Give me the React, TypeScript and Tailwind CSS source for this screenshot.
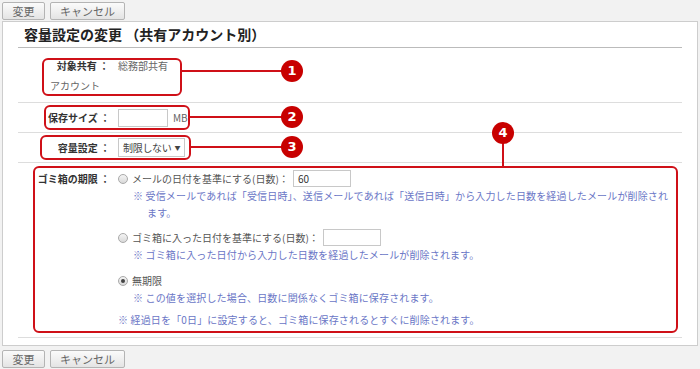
import React from 'react';

function Btn({ label, w }: { label: string; w: string }) {
  return (
    <button
      className={`${w} h-[18px] border border-[#b4b4b4] rounded-[2px] bg-gradient-to-b from-[#fbfbfb] to-[#e4e4e4] text-[11px] leading-none text-[#666] flex items-center justify-center`}
    >
      {label}
    </button>
  );
}

function Radio({ checked }: { checked?: boolean }) {
  return (
    <span className="w-[10px] h-[10px] rounded-full border border-[#a9a9a9] bg-gradient-to-b from-[#f4f4f4] to-[#d9d9d9] flex items-center justify-center shrink-0">
      {checked && <span className="w-[4px] h-[4px] rounded-full bg-[#444]" />}
    </span>
  );
}

function Marker({ n }: { n: number }) {
  return (
    <div className="w-[22px] h-[22px] rounded-full bg-[#c80000] text-white text-[13px] font-bold flex items-center justify-center font-['DejaVu_Sans',sans-serif]">
      {n}
    </div>
  );
}

const label = 'w-[100px] shrink-0 text-right font-bold text-[#333] pr-[8px] whitespace-nowrap';
const note = 'text-[#6a76c6] leading-[17px] whitespace-nowrap tracking-[0.15px]';

export default function App() {
  return (
    <div className="relative w-[700px] h-[369px] overflow-hidden bg-[#f2f2f2] font-['Noto_Sans_CJK_JP','Noto_Sans',sans-serif] text-[10px] text-[#555]">
      <div className="flex gap-[5px] pl-[2px] pt-[2px] h-[21px]">
        <Btn label="変更" w="w-[43px]" />
        <Btn label="キャンセル" w="w-[75px]" />
      </div>

      <div className="mx-[2px] h-[325px] border border-[#cdcdcd] bg-white px-[15px]">
        <div className="h-[26px] flex items-center pl-[6px] border-b border-[#bbb] text-[14px] font-bold text-[#222]">
          容量設定の変更 （共有アカウント別）
        </div>

        {/* 対象共有 */}
        <div className="h-[55px] border-b border-[#ddd] pt-[8px]">
          <div className="ml-[32px] leading-[20px]">
            <div className="flex">
              <span className="w-[60px] pr-[1px] text-right font-bold text-[#333] whitespace-nowrap">対象共有 ：</span>
              <span className="ml-[8px] text-[#666]">総務部共有</span>
            </div>
            <div className="text-[#666]">アカウント</div>
          </div>
        </div>

        {/* 保存サイズ */}
        <div className="h-[30px] border-b border-[#ddd] flex items-center">
          <div className={label}>保存サイズ ：</div>
          <div className="w-[50px] h-[18px] border border-[#c8c8c8] bg-white" />
          <span className="ml-[5px] text-[#666]">MB</span>
        </div>

        {/* 容量設定 */}
        <div className="h-[30px] border-b border-[#ddd] flex items-center">
          <div className={label}>容量設定 ：</div>
          <div className="w-[67px] h-[19px] border border-[#c8c8c8] bg-white flex items-center pl-[4px] text-[#444] whitespace-nowrap">
            <span className="tracking-[-0.3px]">制限しない</span>
            <span className="ml-[3px] text-[6px]">▼</span>
          </div>
        </div>

        {/* ゴミ箱の期限 */}
        <div className="h-[175px] border-b border-[#ddd] pt-[7px] flex">
          <div className={`${label} h-[17px] flex items-center justify-end`}>ゴミ箱の期限 ：</div>
          <div className="flex-1">
            <div className="h-[17px] flex items-center">
              <Radio />
              <span className="ml-[4px] text-[#555] whitespace-nowrap">メールの日付を基準にする(日数)：</span>
              <div className="ml-[4px] w-[58px] h-[17px] border border-[#c8c8c8] bg-white flex items-center pl-[4px] text-[#333]">
                60
              </div>
            </div>
            <div className={`${note} pl-[15px]`}>
              ※ 受信メールであれば「受信日時」、送信メールであれば「送信日時」から入力した日数を経過したメールが削除され
            </div>
            <div className={`${note} pl-[29px]`}>ます。</div>

            <div className="mt-[8px] h-[17px] flex items-center">
              <Radio />
              <span className="ml-[4px] text-[#555] whitespace-nowrap">ゴミ箱に入った日付を基準にする(日数)：</span>
              <div className="ml-[4px] w-[58px] h-[17px] border border-[#c8c8c8] bg-white" />
            </div>
            <div className={`${note} pl-[15px]`}>※ ゴミ箱に入った日付から入力した日数を経過したメールが削除されます。</div>

            <div className="mt-[9px] h-[17px] flex items-center">
              <Radio checked />
              <span className="ml-[4px] text-[#555]">無期限</span>
            </div>
            <div className={`${note} pl-[15px]`}>※ この値を選択した場合、日数に関係なくゴミ箱に保存されます。</div>

            <div className={`${note} mt-[5px]`}>※ 経過日を「0日」に設定すると、ゴミ箱に保存されるとすぐに削除されます。</div>
          </div>
        </div>
      </div>

      <div className="flex gap-[5px] pl-[2px] pt-[4px]">
        <Btn label="変更" w="w-[43px]" />
        <Btn label="キャンセル" w="w-[75px]" />
      </div>

      {/* annotations */}
      <div className="absolute left-[42px] top-[58px] w-[140px] h-[38px] border-2 border-[#cf1018] rounded-[6px]" />
      <div className="absolute left-[182px] top-[70px] w-[100px] h-[2px] bg-[#cf1018]" />
      <div className="absolute left-[281px] top-[60px]"><Marker n={1} /></div>

      <div className="absolute left-[44px] top-[105px] w-[146px] h-[25px] border-2 border-[#cf1018] rounded-[6px]" />
      <div className="absolute left-[190px] top-[116px] w-[92px] h-[2px] bg-[#cf1018]" />
      <div className="absolute left-[281px] top-[106px]"><Marker n={2} /></div>

      <div className="absolute left-[40px] top-[135px] w-[151px] h-[25px] border-2 border-[#cf1018] rounded-[6px]" />
      <div className="absolute left-[191px] top-[146px] w-[91px] h-[2px] bg-[#cf1018]" />
      <div className="absolute left-[281px] top-[136px]"><Marker n={3} /></div>

      <div className="absolute left-[33px] top-[166px] w-[645px] h-[167px] border-2 border-[#cf1018] rounded-[6px]" />
      <div className="absolute left-[502px] top-[143px] w-[2px] h-[24px] bg-[#cf1018]" />
      <div className="absolute left-[492px] top-[122px]"><Marker n={4} /></div>
    </div>
  );
}
